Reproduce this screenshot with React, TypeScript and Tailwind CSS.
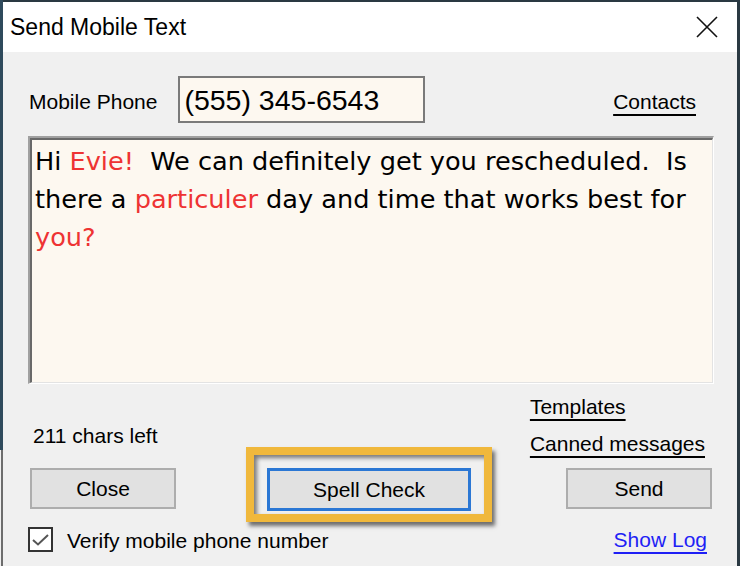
import React from "react";

function CloseIcon() {
  return (
    <svg width="22" height="22" viewBox="0 0 22 22" fill="none">
      <path d="M1 1 L21 21 M21 1 L1 21" stroke="#111" strokeWidth="1.6" />
    </svg>
  );
}

function Button({ label, className }: { label: string; className?: string }) {
  return (
    <div
      className={`flex h-[41px] w-[146px] items-center justify-center border-2 border-[#adadad] bg-[#e1e1e1] ${className ?? ""}`}
    >
      {label}
    </div>
  );
}

export default function App() {
  return (
    <div
      className="flex h-[566px] w-[740px] overflow-hidden bg-[#f0f0f0] text-[21px] leading-6 text-black"
      style={{ fontFamily: '"Liberation Sans", Arial, sans-serif' }}
    >
      {/* left window edge */}
      <div className="flex w-[3px] flex-col">
        <div className="h-[450px] bg-[#2f4a5c]" />
        <div className="flex-1 border-l border-[#f0f0f0] bg-[#6d6d6d]" />
      </div>

      <div className="flex flex-1 flex-col border-t-2 border-[#2a3942]">
        {/* title bar */}
        <div className="flex h-[50px] items-center justify-between bg-white pl-[7px] pr-[19px]">
          <span className="text-[23px]">Send Mobile Text</span>
          <CloseIcon />
        </div>

        {/* phone row */}
        <div className="mt-[24px] flex items-center pl-[26px] pr-[41px]">
          <span className="pt-[5px]">Mobile Phone</span>
          <div className="ml-[21px] flex h-[47px] w-[247px] items-center border-2 border-[#7a7a7a] bg-[#fdf8f0] px-[4px] text-[28.5px]">
            (555) 345-6543
          </div>
          <span className="ml-auto pt-[5px] underline underline-offset-[5px]">Contacts</span>
        </div>

        {/* message box */}
        <div className="ml-[25px] mr-[23px] mt-[13px] h-[248px] border-b border-l-2 border-r border-t-2 border-[#a0a0a0] border-b-white border-r-white">
          <div className="h-full border-b border-l-2 border-r border-t-2 border-[#696969] border-b-[#e3e3e3] border-r-[#e3e3e3] bg-[#fdf8f0] pl-[3px] pt-[2px]">
            <p
              className="whitespace-pre text-[25.6px] leading-[38px] text-black"
              style={{ fontFamily: '"DejaVu Sans", Verdana, sans-serif' }}
            >
              Hi <span className="text-[#ee3333]">Evie!</span>{"  "}We can definitely get you rescheduled.{"  "}Is
              <br />
              there a <span className="text-[#ee3333]">particuler</span> day and time that works best for
              <br />
              <span className="text-[#ee3333]">you?</span>
            </p>
          </div>
        </div>

        {/* counters and links */}
        <div className="mt-[11px] flex justify-between pl-[30px] pr-[32px]">
          <span className="mt-[29px]">211 chars left</span>
          <div className="flex flex-col items-start gap-[13px]">
            <span className="underline underline-offset-[5px]">Templates</span>
            <span className="underline underline-offset-[5px]">Canned messages</span>
          </div>
        </div>

        {/* buttons */}
        <div className="mt-[12px] flex items-start pl-[27px]">
          <Button label="Close" />
          <div className="relative ml-[91px]">
            <div className="flex h-[43px] w-[204px] items-center justify-center border-[3px] border-[#2b77d4] bg-[#e1e1e1]">
              Spell Check
            </div>
            <div className="pointer-events-none absolute -bottom-[11px] -left-[21px] -right-[21px] -top-[21px] border-[8px] border-[#f0b83c] shadow-[3px_4px_4px_rgba(0,0,0,0.55),inset_3px_3px_4px_rgba(0,0,0,0.5)]" />
          </div>
          <Button label="Send" className="ml-[95px]" />
        </div>

        {/* footer */}
        <div className="mt-[15px] flex items-center pl-[25px] pr-[30px]">
          <div className="flex h-[25px] w-[25px] items-center justify-center border-2 border-[#333] bg-white">
            <svg width="19" height="19" viewBox="0 0 19 19" fill="none">
              <path d="M2 10 L7 14.5 L17 5" stroke="#555" strokeWidth="2" />
            </svg>
          </div>
          <span className="ml-[14px] pt-[3px]">Verify mobile phone number</span>
          <span className="ml-auto text-[#1f1ff5] underline underline-offset-[5px]">Show Log</span>
        </div>
      </div>

      {/* right window edge */}
      <div className="w-[3px] bg-[#2a3942]" />
    </div>
  );
}
